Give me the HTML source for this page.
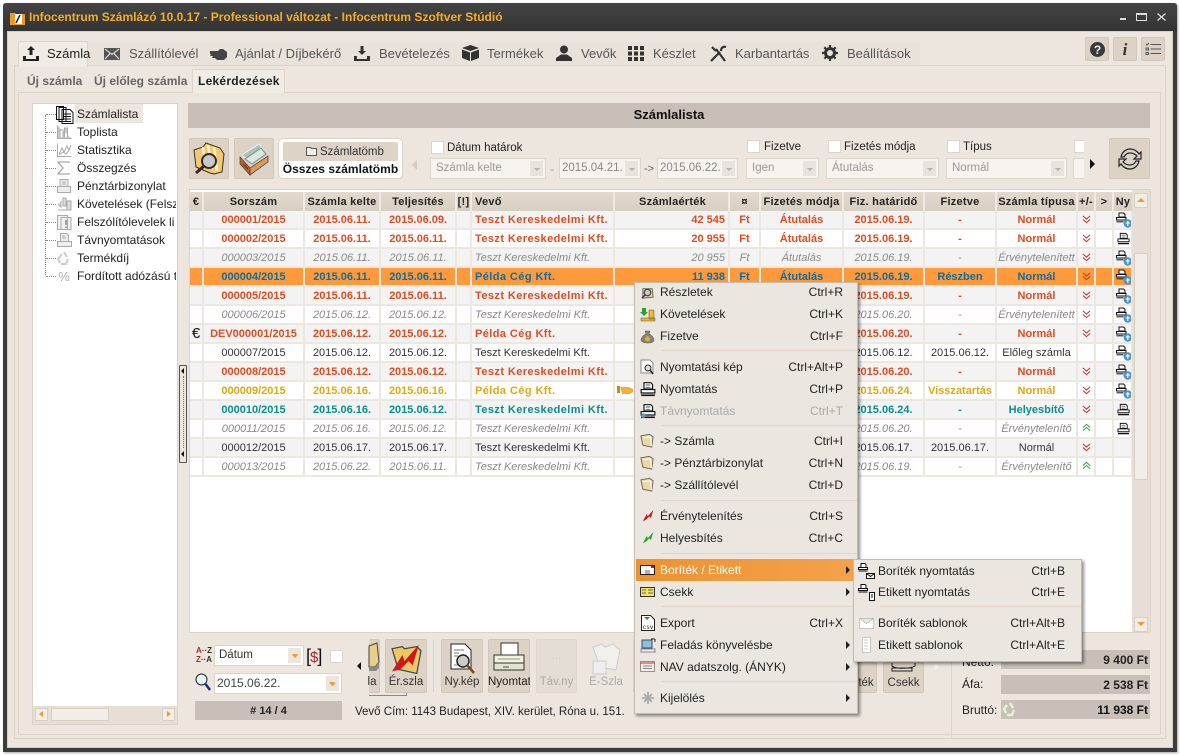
<!DOCTYPE html>
<html><head><meta charset="utf-8"><style>
html,body{margin:0;padding:0;background:#fff}
#w{position:relative;width:1180px;height:755px;overflow:hidden;font:12px "Liberation Sans",sans-serif;color:#222;background:#fff}
.a,.l,.c,.ck,.bt,.cb{position:absolute}
.l{white-space:nowrap;line-height:14px}
.c{white-space:nowrap;line-height:14px;text-align:center}
.ck{width:11px;height:11px;background:#fff;border:1px solid #ddd6cc}
.bt{background:#dcd2c6;border:1px solid #d0c6b9;border-radius:2px;box-sizing:border-box}
.cb{background:#f7f4f0;border:1px solid #ddd6cc;box-sizing:border-box;color:#999;font-size:11.5px;line-height:19px;padding-left:5px;white-space:nowrap;overflow:hidden}
.cb i{position:absolute;right:2px;top:2px;bottom:2px;width:13px;background:#e8e3dc}
.cb i:after{content:"";position:absolute;left:4px;top:7px;border:3px solid transparent;border-top:3px solid #b8b0a6}
.n{position:absolute;top:46px;font-size:13px;line-height:15px;color:#555;white-space:nowrap}
svg{position:absolute;overflow:visible}
table{position:absolute;left:190px;top:192px;width:942px;border-collapse:collapse;table-layout:fixed;font-size:11px}
th{height:19px;padding:0;background:linear-gradient(#e2dace,#d8cfc2);border-right:2px solid #efeae4;font-size:11px;font-weight:bold;color:#222;letter-spacing:.25px;white-space:nowrap;overflow:hidden}
td{height:17px;padding:0;border-right:2px solid #ece7e0;border-bottom:2px solid #ece7e0;text-align:center;white-space:nowrap;overflow:hidden;position:relative;letter-spacing:0}
tr.e td{background:#f3f3f3}
tr.w td{background:#fff}
tr.s td{background:#fe9a3b;border-right-color:#f3e7d8;color:#0b6ea6;font-weight:bold}
tr.r td{color:#e8491d;font-weight:bold}
tr.g td{color:#8a8a8a;font-style:italic}
tr.k td{color:#333}
tr.y td{color:#e5a80c;font-weight:bold}
tr.t td{color:#08908c;font-weight:bold}
tr.s td.v,tr.r td.v,tr.y td.v,tr.t td.v{letter-spacing:.42px}
td.v{text-align:left;padding-left:3px}
td.m{text-align:right;padding-right:3px}
td svg{left:2px;top:2px}
.m1{position:absolute;left:634px;top:282px;width:224px;height:432px;background:#ece6e0;border:1px solid #c6bcb0;box-sizing:border-box;box-shadow:2px 2px 3px rgba(0,0,0,.45)}
.m2{position:absolute;left:853px;top:559px;width:229px;height:103px;background:#ece6e0;border:1px solid #c6bcb0;box-sizing:border-box;box-shadow:2px 2px 3px rgba(0,0,0,.45)}
.ml{position:absolute;left:660px;white-space:nowrap;line-height:14px;font-size:12px;color:#222}
.mr{position:absolute;right:337px;white-space:nowrap;line-height:14px;font-size:12px;color:#222}
.sp{position:absolute;left:661px;width:196px;height:1px;background:#e0d5c8}
.ar{position:absolute;left:846px;border:4px solid transparent;border-left:4px solid #222;border-right:0}
.tl{position:absolute;left:77px;white-space:nowrap;line-height:14px;font-size:12px;color:#222}
.dh{position:absolute;height:0;border-top:1px dotted #888;left:46px;width:10px}
.bl{position:absolute;white-space:nowrap;font-size:11.5px;text-align:center;line-height:14px;color:#333}
</style></head><body><div id="w">
<svg width="0" height="0" style="position:absolute"><defs>
<symbol id="pr" viewBox="0 0 14 14"><path d="M3.500 1.500h6l1.500 1.500v4H3.500zM1 7.500h12v3H1z" fill="#fff" stroke="#111" stroke-width="1"/><path d="M1 12.500h12" stroke="#111" stroke-width="1.400"/><path d="M5 3.500h4M5 5.500h4" stroke="#555" stroke-width=".8"/></symbol>
<symbol id="pp" viewBox="0 0 16 16"><path d="M3 1h4.500L9 2.500V5H3zM.5 5.500h9.500v2.500H.5z" fill="#fff" stroke="#111" stroke-width="1"/><path d="M.5 9.800h7" stroke="#111" stroke-width="1"/><circle cx="11.800" cy="11.500" r="4.200" fill="#4f93c6"/><path d="M11.800 9v5M9.800 11h4" stroke="#e6f6ff" stroke-width="1.200"/></symbol>
<symbol id="dn" viewBox="0 0 10 10"><path d="M1 1l4 3.500L9 1M1 5l4 3.500L9 5" fill="none" stroke="#d0302a" stroke-width="1.100"/></symbol>
<symbol id="up" viewBox="0 0 10 10"><path d="M1 5l4-3.500L9 5M1 8.500L5 5l4 3.500" fill="none" stroke="#2aa84a" stroke-width="1.100"/></symbol>
<symbol id="fo" viewBox="0 0 16 16"><path d="M1 3l9-1.500 4 2.500-1.500 11L3 13z" fill="#e9d9a8" stroke="#6b6250"/><path d="M3 5l8-1 1.500 10" fill="none" stroke="#fff"/></symbol>
<symbol id="zi" viewBox="0 0 16 16"><path d="M3 4h10l1 9-11 1z" fill="#e6d8a8" stroke="#665"/><circle cx="8" cy="8" r="3.500" fill="#c8c8c8" stroke="#444" stroke-width="1.300"/><path d="M5.500 10.500L2 14" stroke="#433" stroke-width="1.600"/></symbol>
<symbol id="bolt" viewBox="0 0 16 16"><path d="M1 15L6 6l1 3 7-8-3 10-2-2-4 4z" fill="currentColor"/></symbol>
</defs></svg>

<!-- window frame -->
<div class="a" style="left:3px;top:3px;width:1174px;height:749px;background:#3c3c3c;border-radius:3px 3px 0 0;box-shadow:1px 1px 2px rgba(0,0,0,.35)"></div>
<div class="a" style="left:3px;top:3px;width:1174px;height:28px;background:linear-gradient(#444,#333);border-radius:3px 3px 0 0"></div>
<div class="a" style="left:7px;top:31px;width:1166px;height:717px;background:#ece6df;border:1px solid #d8cfc3;box-sizing:border-box"></div>
<svg style="left:10px;top:11px" width="16" height="15" viewBox="0 0 16 15"><path d="M0 2h5l1 1h9v11H0z" fill="#e99a2a"/><path d="M5 3h7v10H5z" fill="#fff"/><path d="M6 12l4-8" stroke="#222" stroke-width="1.500"/></svg>
<div class="l" style="left:29px;top:10px;font-size:12px;font-weight:bold;color:#f5ad24;letter-spacing:.01px">Infocentrum Számlázó 10.0.17 - Professional változat - Infocentrum Szoftver Stúdió</div>
<div class="a" style="left:1120px;top:18px;width:6px;height:2px;background:#ddd"></div>
<div class="a" style="left:1136px;top:13px;width:9px;height:5px;border:1px solid #ddd;border-top-width:2px;box-sizing:content-box"></div>
<svg style="left:1157px;top:13px" width="9" height="8" viewBox="0 0 9 8"><path d="M.5.500l8 7M8.500.500l-8 7" stroke="#ddd" stroke-width="1.300" fill="none"/></svg>

<!-- tab page frames -->
<div class="a" style="left:14px;top:65px;width:1152px;height:674px;border:1px solid #ddd3c6;box-sizing:border-box"></div>
<div class="a" style="left:18px;top:92px;width:1143px;height:643px;border:1px solid #ddd3c6;box-sizing:border-box"></div>
<div class="a" style="left:88px;top:42px;width:832px;height:23px;background:#e9e2da"></div>
<div class="a" style="left:18px;top:41px;width:70px;height:26px;background:#f0ebe5;border:1px solid #ddd3c6;border-bottom:0;box-sizing:border-box"></div>

<!-- nav -->
<svg style="left:23px;top:46px" width="16" height="15" viewBox="0 0 16 15" fill="#222"><path d="M6.500 9V4H4l4-4 4 4H9.500v5zM0 10h3v3h10v-3h3v5H0z"/></svg>
<div class="n" style="left:47px;color:#222">Számla</div>
<svg style="left:104px;top:48px" width="16" height="12" viewBox="0 0 16 12"><path d="M0 0h16v12H0z" fill="#555"/><path d="M1 1l7 5.500L15 1M1 11l5-5.500M15 11l-5-5.500" fill="none" stroke="#eee"/></svg>
<div class="n" style="left:129px">Szállítólevél</div>
<svg style="left:210px;top:48px" width="17" height="12" viewBox="0 0 17 12" fill="#444"><path d="M0 3h8l2-2h3l4 3v5l-3 3H7L5 10H2l1-2H0l1-2H0z"/></svg>
<div class="n" style="left:235px">Ajánlat / Díjbekérő</div>
<svg style="left:354px;top:46px" width="16" height="15" viewBox="0 0 16 15" fill="#333"><path d="M6.500 0h3v5H12L8 9 4 5h2.500zM0 10h3v3h10v-3h3v5H0z"/></svg>
<div class="n" style="left:379px">Bevételezés</div>
<svg style="left:462px;top:45px" width="17" height="16" viewBox="0 0 17 16" fill="#333"><path d="M8.500 0L17 3 8.500 6 0 3zM0 4.500l8 3V16l-8-3zM17 4.500l-8 3V16l8-3z"/></svg>
<div class="n" style="left:487px">Termékek</div>
<svg style="left:556px;top:45px" width="16" height="16" viewBox="0 0 16 16" fill="#333"><circle cx="8" cy="4.500" r="4"/><path d="M0 16v-3l5-3.500h6l5 3.500v3z"/></svg>
<div class="n" style="left:581px">Vevők</div>
<svg style="left:628px;top:46px" width="16" height="15" viewBox="0 0 16 15" fill="#333"><path d="M0 0h4v4H0zM6 0h4v4H6zM12 0h4v4h-4zM0 5.500h4v4H0zM6 5.500h4v4H6zM12 5.500h4v4h-4zM0 11h4v4H0zM6 11h4v4H6zM12 11h4v4h-4z"/></svg>
<div class="n" style="left:653px">Készlet</div>
<svg style="left:710px;top:45px" width="17" height="17" viewBox="0 0 17 17" fill="none" stroke="#333" stroke-width="2.200"><path d="M1 16L10 7M6 4l9 12M2 2l4 4M11 6c0-3 2-5 5-4"/></svg>
<div class="n" style="left:735px">Karbantartás</div>
<svg style="left:822px;top:45px" width="16" height="16" viewBox="0 0 16 16"><circle cx="8" cy="8" r="4.500" fill="none" stroke="#333" stroke-width="3"/><path d="M8 0v16M0 8h16M2.300 2.300l11.400 11.400M13.700 2.300L2.300 13.700" stroke="#333" stroke-width="2.200" stroke-dasharray="3 10"/></svg>
<div class="n" style="left:847px">Beállítások</div>
<div class="bt" style="left:1085px;top:37px;width:24px;height:24px"></div>
<svg style="left:1090px;top:42px" width="15" height="15" viewBox="0 0 15 15"><circle cx="7.500" cy="7.500" r="7.500" fill="#3a3a3a"/><text x="7.500" y="12" text-anchor="middle" font-size="12" font-weight="bold" fill="#eee" font-family="Liberation Sans">?</text></svg>
<div class="bt" style="left:1113px;top:37px;width:24px;height:24px"></div>
<div class="c" style="left:1113px;top:41px;width:24px;font:italic bold 17px/17px 'Liberation Serif',serif;color:#333">i</div>
<div class="bt" style="left:1141px;top:37px;width:24px;height:24px"></div>
<svg style="left:1145px;top:41px" width="16" height="16" viewBox="0 0 16 16" stroke="#555" fill="none"><path d="M5.500 3.500H16M5.500 8H16M5.500 12.500H16M1 3l1 1 2-2M1 7h2.500v2H1zM1 11.500h2.500v2H1z"/></svg>

<!-- sub tabs -->
<div class="l" style="left:27px;top:74px;font-size:12px;font-weight:bold;color:#666">Új számla</div>
<div class="l" style="left:94px;top:74px;font-size:12px;font-weight:bold;color:#666">Új előleg számla</div>
<div class="a" style="left:192px;top:69px;width:93px;height:24px;background:#f0ebe5;border:1px solid #ddd3c6;border-bottom:0;box-sizing:border-box"></div>
<div class="l" style="left:198px;top:74px;font-size:12px;font-weight:bold;color:#222;letter-spacing:.25px">Lekérdezések</div>

<!-- tree -->
<div class="a" style="left:32px;top:103px;width:146px;height:622px;background:#fff;border:1px solid #ddd3c6;box-sizing:border-box"></div>
<div class="a" style="left:75px;top:104px;width:68px;height:19px;background:#ece6df"></div>
<div class="a" style="left:45px;top:115px;height:160px;border-left:1px dotted #888"></div>
<div class="dh" style="top:114px"></div><div class="dh" style="top:132px"></div><div class="dh" style="top:150px"></div><div class="dh" style="top:168px"></div><div class="dh" style="top:186px"></div><div class="dh" style="top:204px"></div><div class="dh" style="top:222px"></div><div class="dh" style="top:240px"></div><div class="dh" style="top:258px"></div><div class="dh" style="top:276px"></div>
<svg style="left:56px;top:106px" width="18" height="18" viewBox="0 0 18 18" fill="#fff" stroke="#111"><path d="M.5.500h7v13h-7zM3 1.500h7v14H3zM6 3.500h8l3 3v11H6z"/><path d="M8 8h7M8 10.500h7M8 13h7M8 15.500h7"/></svg>
<svg style="left:57px;top:125px" width="15" height="14" viewBox="0 0 15 14" fill="#ccc" stroke="#aaa"><path d="M.5.500v13h14M3 12V5h3v7M7.500 12V3h3v9"/></svg>
<svg style="left:57px;top:143px" width="15" height="14" viewBox="0 0 15 14" fill="none" stroke="#aaa"><path d="M.5.500v13h14M2 11l3-6 2 4 3-6 2 4 2-5M2 12l4-3 3 2 4-5"/></svg>
<svg style="left:57px;top:161px" width="13" height="14" viewBox="0 0 13 14" fill="none" stroke="#aaa" stroke-width="1.300"><path d="M12 2V1H1l5 6-5 6h11v-1"/></svg>
<svg style="left:57px;top:179px" width="15" height="14" viewBox="0 0 15 14" fill="#eee" stroke="#aaa"><path d="M3 .500h8v7H3zM.5 7.500h13v6H.5zM5 3h4M5 5h4"/></svg>
<svg style="left:57px;top:197px" width="15" height="14" viewBox="0 0 15 14" fill="#ddd" stroke="#aaa"><path d="M6 1h3v8H6zM10 4h4v9h-4zM1 13h12M4 4v6L1 7"/></svg>
<svg style="left:57px;top:215px" width="15" height="15" viewBox="0 0 15 15" fill="#f0f0f0" stroke="#aaa"><path d="M.5.500h10v14H.5zM4 2.500h10v12H4z"/><path d="M9 5v5M9 11.500v1.500" stroke="#888" stroke-width="1.500"/></svg>
<svg style="left:57px;top:233px" width="15" height="15" viewBox="0 0 15 15" fill="#eee" stroke="#aaa"><path d="M3.500.500h6l2 2v6h-8zM.5 8.500h14v5H.5zM5 3h3M5 5h4"/></svg>
<svg style="left:57px;top:251px" width="14" height="14" viewBox="0 0 14 14" fill="none" stroke="#ccc" stroke-width="2"><path d="M7 1l3 5M11 8l-2 5H4M3 12L1 8l4-5"/></svg>
<div class="c" style="left:57px;top:270px;width:14px;font-size:13px;color:#aaa">%</div>
<div class="tl" style="top:107px">Számlalista</div>
<div class="tl" style="top:125px">Toplista</div>
<div class="tl" style="top:143px">Statisztika</div>
<div class="tl" style="top:161px">Összegzés</div>
<div class="tl" style="top:179px">Pénztárbizonylat</div>
<div class="tl" style="top:197px;width:99px;overflow:hidden">Követelések (Felsz</div>
<div class="tl" style="top:215px;width:99px;overflow:hidden">Felszólítólevelek li</div>
<div class="tl" style="top:233px">Távnyomtatások</div>
<div class="tl" style="top:251px">Termékdíj</div>
<div class="tl" style="top:269px;width:99px;overflow:hidden">Fordított adózású t</div>
<!-- tree hscroll -->
<div class="a" style="left:33px;top:706px;width:144px;height:18px;background:#e6dfd5"></div>
<div class="a" style="left:35px;top:708px;width:13px;height:13px;background:#f2ede7;border:1px solid #d8cfc3;box-sizing:border-box"></div>
<div class="a" style="left:51px;top:708px;width:58px;height:13px;background:#f2ede7;border:1px solid #d8cfc3;box-sizing:border-box"></div>
<div class="a" style="left:162px;top:708px;width:13px;height:13px;background:#f2ede7;border:1px solid #d8cfc3;box-sizing:border-box"></div>
<div class="a" style="left:39px;top:711px;border:3px solid transparent;border-right:4px solid #f29a2e;border-left:0"></div>
<div class="a" style="left:167px;top:711px;border:3px solid transparent;border-left:4px solid #f29a2e;border-right:0"></div>
<!-- splitter -->
<div class="a" style="left:179px;top:365px;width:8px;height:98px;background:#ece6df;border:1px solid #555;box-sizing:border-box;border-radius:1px"></div>
<div class="a" style="left:181px;top:368px;border:3px solid transparent;border-right:3px solid #111;border-left:0"></div>
<div class="a" style="left:181px;top:451px;border:3px solid transparent;border-right:3px solid #111;border-left:0"></div>
<div class="a" style="left:183px;top:376px;height:72px;border-left:1px dotted #777"></div>

<!-- heading -->
<div class="a" style="left:188px;top:103px;width:962px;height:25px;background:#c8bfb8"></div>
<div class="c" style="left:188px;top:108px;width:962px;font-size:13px;font-weight:bold;color:#111">Számlalista</div>

<!-- toolbar -->
<div class="bt" style="left:189px;top:138px;width:40px;height:41px"></div>
<svg style="left:192px;top:141px" width="34" height="35" viewBox="0 0 34 35"><path d="M2 9l9-3 3-4 14 5 4 6-2 18-8 2-4-1-14-6z" fill="#f2c873" stroke="#3a3020"/><path d="M11 6l2 18M16 4l4 24M22 6l3 24" stroke="#fff2c8" stroke-width="2.500"/><circle cx="17" cy="20" r="7" fill="#c9c9c9" stroke="#2c2c2c" stroke-width="2"/><path d="M12 25l-8 7" stroke="#40281a" stroke-width="3"/></svg>
<div class="bt" style="left:234px;top:138px;width:40px;height:41px"></div>
<svg style="left:239px;top:143px" width="30" height="32" viewBox="0 0 30 32"><path d="M3 12L20 1l6 9-15 9z" fill="#a9c4b4" stroke="#eef"/><path d="M6 16L22 5l5 6-14 10z" fill="#dbe8dc" stroke="#789"/><path d="M1 14l10 11v7L1 21z" fill="#b06a3a" stroke="#5a3014" stroke-width=".7"/><path d="M11 25l18-12v6L11 32z" fill="#d69a62" stroke="#5a3014" stroke-width=".7"/><path d="M4 20l5 5v2l-5-5z" fill="#6b3b1a"/></svg>
<div class="a" style="left:278px;top:138px;width:125px;height:41px;background:#fff;border:1px solid #ddd3c6;border-radius:5px;box-sizing:border-box"></div>
<div class="a" style="left:283px;top:142px;width:115px;height:19px;background:#ddd3c6;border-radius:2px"></div>
<svg style="left:306px;top:146px" width="11" height="10" viewBox="0 0 11 10"><path d="M.5 1.500h4l1 1h5v7H.5z" fill="#eee" stroke="#555"/></svg>
<div class="l" style="left:320px;top:145px;font-size:11.500px;color:#333">Számlatömb</div>
<div class="c" style="left:279px;top:162px;width:123px;font-size:12px;font-weight:bold;color:#111;letter-spacing:.05px">Összes számlatömb</div>
<div class="a" style="left:412px;top:160px;border:5px solid transparent;border-right:5px solid #d5ccc0;border-left:0"></div>

<div class="ck" style="left:431px;top:141px"></div><div class="l" style="left:447px;top:141px;font-size:11.500px;color:#222">Dátum határok</div>
<div class="cb" style="left:430px;top:158px;width:116px;height:21px">Számla kelte<i></i></div>
<div class="l" style="left:550px;top:162px;color:#999">-</div>
<div class="cb" style="left:559px;top:158px;width:82px;height:21px;color:#888;padding-left:2px">2015.04.21.<i></i></div>
<div class="l" style="left:644px;top:162px;color:#666;font-size:11px">-&gt;</div>
<div class="cb" style="left:657px;top:158px;width:81px;height:21px;color:#888;padding-left:2px">2015.06.22.<i></i></div>
<div class="ck" style="left:747px;top:140px"></div><div class="l" style="left:764px;top:140px;font-size:11.500px">Fizetve</div>
<div class="cb" style="left:746px;top:158px;width:73px;height:21px">Igen<i></i></div>
<div class="ck" style="left:828px;top:140px"></div><div class="l" style="left:844px;top:140px;font-size:11.500px">Fizetés módja</div>
<div class="cb" style="left:826px;top:158px;width:113px;height:21px">Átutalás<i></i></div>
<div class="ck" style="left:947px;top:140px"></div><div class="l" style="left:963px;top:140px;font-size:11.500px">Típus</div>
<div class="cb" style="left:946px;top:158px;width:121px;height:21px">Normál<i></i></div>
<div class="ck" style="left:1074px;top:140px;border-right:0;width:9px"></div>
<div class="cb" style="left:1073px;top:158px;width:11px;height:21px;border-right:0"></div>
<div class="a" style="left:1090px;top:159px;border:5px solid transparent;border-left:5px solid #111;border-right:0"></div>
<div class="bt" style="left:1109px;top:138px;width:41px;height:41px"></div>
<svg style="left:1117px;top:146px" width="26" height="26" viewBox="0 0 26 26" fill="none" stroke="#222" stroke-width="1.200"><path d="M4 11C5 6 9 3 13 3c4 0 7 2 9 5l2-2v7h-7l3-3c-2-2-4-3-7-3-3 0-5 2-6 4zM22 15c-1 5-5 8-9 8-4 0-7-2-9-5l-2 2v-7h7l-3 3c2 2 4 3 7 3 3 0 5-2 6-4z"/></svg>

<!-- grid panel -->
<div class="a" style="left:189px;top:189px;width:962px;height:444px;background:#fff;border:1px solid #ddd3c6;box-sizing:border-box"></div>
<table><colgroup><col style="width:13px"><col style="width:101px"><col style="width:76px"><col style="width:76px"><col style="width:15px"><col style="width:143px"><col style="width:115px"><col style="width:31px"><col style="width:83px"><col style="width:81px"><col style="width:72px"><col style="width:81px"><col style="width:18px"><col style="width:18px"><col style="width:19px"></colgroup>
<tr><th>€</th><th>Sorszám</th><th>Számla kelte</th><th>Teljesítés</th><th>[!]</th><th style="text-align:left;padding-left:3px">Vevő</th><th style="text-align:right;padding-right:22px">Számlaérték</th><th>¤</th><th>Fizetés módja</th><th>Fiz. határidő</th><th>Fizetve</th><th>Számla típusa</th><th>+/-</th><th>&gt;</th><th style="border-right:0">Ny</th></tr>
<tr class="e r"><td></td><td>000001/2015</td><td>2015.06.11.</td><td>2015.06.09.</td><td></td><td class="v">Teszt Kereskedelmi Kft.</td><td class="m">42 545</td><td>Ft</td><td>Átutalás</td><td>2015.06.19.</td><td>-</td><td>Normál</td><td><svg width="9" height="9" style="left:4px;top:4px"><use href="#dn"/></svg></td><td></td><td><svg width="16" height="16" style="left:2px;top:1px"><use href="#pp"/></svg></td></tr>
<tr class="w r"><td></td><td>000002/2015</td><td>2015.06.11.</td><td>2015.06.11.</td><td></td><td class="v">Teszt Kereskedelmi Kft.</td><td class="m">20 955</td><td>Ft</td><td>Átutalás</td><td>2015.06.19.</td><td>-</td><td>Normál</td><td><svg width="9" height="9" style="left:4px;top:4px"><use href="#dn"/></svg></td><td></td><td><svg width="13" height="13" style="left:3px;top:2px"><use href="#pr"/></svg></td></tr>
<tr class="e g"><td></td><td>000003/2015</td><td>2015.06.11.</td><td>2015.06.11.</td><td></td><td class="v">Teszt Kereskedelmi Kft.</td><td class="m">20 955</td><td>Ft</td><td>Átutalás</td><td>2015.06.19.</td><td>-</td><td>Érvénytelenített</td><td><svg width="9" height="9" style="left:4px;top:4px"><use href="#dn"/></svg></td><td></td><td><svg width="16" height="16" style="left:2px;top:1px"><use href="#pp"/></svg></td></tr>
<tr class="s"><td></td><td>000004/2015</td><td>2015.06.11.</td><td>2015.06.11.</td><td></td><td class="v">Példa Cég Kft.</td><td class="m">11 938</td><td>Ft</td><td>Átutalás</td><td>2015.06.19.</td><td>Részben</td><td>Normál</td><td><svg width="9" height="9" style="left:4px;top:4px"><use href="#dn"/></svg></td><td></td><td><svg width="16" height="16" style="left:2px;top:1px"><use href="#pp"/></svg></td></tr>
<tr class="e r"><td></td><td>000005/2015</td><td>2015.06.11.</td><td>2015.06.11.</td><td></td><td class="v">Teszt Kereskedelmi Kft.</td><td class="m"></td><td></td><td></td><td>2015.06.19.</td><td>-</td><td>Normál</td><td><svg width="9" height="9" style="left:4px;top:4px"><use href="#dn"/></svg></td><td></td><td><svg width="16" height="16" style="left:2px;top:1px"><use href="#pp"/></svg></td></tr>
<tr class="w g"><td></td><td>000006/2015</td><td>2015.06.12.</td><td>2015.06.12.</td><td></td><td class="v">Teszt Kereskedelmi Kft.</td><td class="m"></td><td></td><td></td><td>2015.06.20.</td><td>-</td><td>Érvénytelenített</td><td><svg width="9" height="9" style="left:4px;top:4px"><use href="#dn"/></svg></td><td></td><td><svg width="16" height="16" style="left:2px;top:1px"><use href="#pp"/></svg></td></tr>
<tr class="e r"><td style="font:normal 15px 'Liberation Sans';color:#111">€</td><td>DEV000001/2015</td><td>2015.06.12.</td><td>2015.06.12.</td><td></td><td class="v">Példa Cég Kft.</td><td class="m"></td><td></td><td></td><td>2015.06.20.</td><td>-</td><td>Normál</td><td><svg width="9" height="9" style="left:4px;top:4px"><use href="#dn"/></svg></td><td></td><td><svg width="16" height="16" style="left:2px;top:1px"><use href="#pp"/></svg></td></tr>
<tr class="w k"><td></td><td>000007/2015</td><td>2015.06.12.</td><td>2015.06.12.</td><td></td><td class="v">Teszt Kereskedelmi Kft.</td><td class="m"></td><td></td><td></td><td>2015.06.12.</td><td>2015.06.12.</td><td>Előleg számla</td><td></td><td></td><td><svg width="16" height="16" style="left:2px;top:1px"><use href="#pp"/></svg></td></tr>
<tr class="e r"><td></td><td>000008/2015</td><td>2015.06.12.</td><td>2015.06.12.</td><td></td><td class="v">Teszt Kereskedelmi Kft.</td><td class="m"></td><td></td><td></td><td>2015.06.20.</td><td>-</td><td>Normál</td><td><svg width="9" height="9" style="left:4px;top:4px"><use href="#dn"/></svg></td><td></td><td><svg width="16" height="16" style="left:2px;top:1px"><use href="#pp"/></svg></td></tr>
<tr class="w y"><td></td><td>000009/2015</td><td>2015.06.16.</td><td>2015.06.16.</td><td></td><td class="v">Példa Cég Kft.</td><td class="m"></td><td></td><td></td><td>2015.06.24.</td><td style="overflow:visible">Visszatartás</td><td>Normál</td><td><svg width="9" height="9" style="left:4px;top:4px"><use href="#dn"/></svg></td><td></td><td><svg width="16" height="16" style="left:2px;top:1px"><use href="#pp"/></svg></td></tr>
<tr class="e t"><td></td><td>000010/2015</td><td>2015.06.16.</td><td>2015.06.12.</td><td></td><td class="v">Teszt Kereskedelmi Kft.</td><td class="m"></td><td></td><td></td><td>2015.06.24.</td><td>-</td><td>Helyesbítő</td><td><svg width="9" height="9" style="left:4px;top:4px"><use href="#dn"/></svg></td><td></td><td><svg width="13" height="13" style="left:3px;top:2px"><use href="#pr"/></svg></td></tr>
<tr class="w g"><td></td><td>000011/2015</td><td>2015.06.16.</td><td>2015.06.12.</td><td></td><td class="v">Teszt Kereskedelmi Kft.</td><td class="m"></td><td></td><td></td><td>2015.06.20.</td><td>-</td><td>Érvénytelenítő</td><td><svg width="9" height="9" style="left:4px;top:3px"><use href="#up"/></svg></td><td></td><td><svg width="13" height="13" style="left:3px;top:2px"><use href="#pr"/></svg></td></tr>
<tr class="e k"><td></td><td>000012/2015</td><td>2015.06.17.</td><td>2015.06.17.</td><td></td><td class="v">Teszt Kereskedelmi Kft.</td><td class="m"></td><td></td><td></td><td>2015.06.17.</td><td>2015.06.17.</td><td>Normál</td><td><svg width="9" height="9" style="left:4px;top:4px"><use href="#dn"/></svg></td><td></td><td></td></tr>
<tr class="w g"><td></td><td>000013/2015</td><td>2015.06.22.</td><td>2015.06.11.</td><td></td><td class="v">Teszt Kereskedelmi Kft.</td><td class="m"></td><td></td><td></td><td>2015.06.19.</td><td>-</td><td>Érvénytelenítő</td><td><svg width="9" height="9" style="left:4px;top:3px"><use href="#up"/></svg></td><td></td><td></td></tr>
</table>
<svg style="left:617px;top:384px" width="18" height="11" viewBox="0 0 18 11"><path d="M0 2h3v7H0z" fill="#c88a1e"/><path d="M3 3h9l4 2v3l-3 2H5z" fill="#eeb23a"/></svg>
<!-- grid scrollbar -->
<div class="a" style="left:1132px;top:190px;width:18px;height:442px;background:#e6dfd5"></div>
<div class="a" style="left:1134px;top:193px;width:12px;height:13px;background:#f2ede7;border:1px solid #d8cfc3;border-radius:2px"></div>
<div class="a" style="left:1137px;top:198px;border:4px solid transparent;border-bottom:4px solid #f29a2e;border-top:0"></div>
<div class="a" style="left:1134px;top:253px;width:12px;height:225px;background:#f2ede7;border:1px solid #d8cfc3;border-radius:2px"></div>
<div class="a" style="left:1134px;top:617px;width:12px;height:13px;background:#f2ede7;border:1px solid #d8cfc3;border-radius:2px"></div>
<div class="a" style="left:1137px;top:622px;border:4px solid transparent;border-top:4px solid #f29a2e;border-bottom:0"></div>

<!-- bottom left controls -->
<div class="l" style="left:196px;top:646px;font-size:8px;line-height:9px;color:#a03030;font-weight:bold">A<span style="color:#333">··Z</span><br>Z<span style="color:#333">··A</span></div>
<div class="cb" style="left:214px;top:645px;width:90px;height:21px;background:#fff;color:#333;padding-left:4px;border-color:#ddd3c6">Dátum<i style="background:#ece6df"></i></div>
<div class="a" style="left:292px;top:654px;border:3px solid transparent;border-top:4px solid #f29a2e;border-bottom:0"></div>
<div class="l" style="left:306px;top:647px;font-size:18px;line-height:18px;color:#111;letter-spacing:-1px;font-weight:normal">[<span style="color:#a02828;font-size:15px">$</span>]</div>
<div class="ck" style="left:330px;top:650px"></div>
<svg style="left:195px;top:673px" width="16" height="18" viewBox="0 0 16 18" fill="none"><circle cx="6.500" cy="6.500" r="5.500" fill="#e8f3f6" stroke="#222"/><path d="M10.500 11l4.500 6" stroke="#1c2e8c" stroke-width="2.500"/></svg>
<div class="cb" style="left:214px;top:673px;width:128px;height:21px;background:#fff;color:#444;padding-left:2px;border-color:#ddd3c6;font-size:12px">2015.06.22.<i style="background:#ece6df"></i></div>
<div class="a" style="left:329px;top:682px;border:3px solid transparent;border-top:4px solid #f29a2e;border-bottom:0"></div>
<div class="a" style="left:195px;top:701px;width:147px;height:19px;background:#c8bfb8"></div>
<div class="c" style="left:195px;top:704px;width:147px;font-size:11px;font-weight:bold;color:#222">#&nbsp;14 / 4</div>

<!-- bottom buttons -->
<div class="a" style="left:357px;top:662px;border:4px solid transparent;border-right:4px solid #111;border-left:0"></div>
<div class="bt" style="left:369px;top:639px;width:11px;height:54px;border-left:0"></div>
<svg style="left:369px;top:642px" width="11" height="34" viewBox="0 0 11 34"><path d="M0 4l8-3 2 19-4 5H0z" fill="#e8cf8a" stroke="#444"/><path d="M0 25h6l4-5v6l-3 3H0z" fill="#8a8a8a"/></svg>
<div class="bl" style="left:364px;top:675px;width:16px;overflow:hidden;direction:rtl">la</div>
<div class="a" style="left:369px;top:693px;width:38px;height:3px;border:1px solid #888;border-top:0;border-left:0;box-sizing:border-box"></div>
<div class="bt" style="left:385px;top:639px;width:42px;height:54px"></div>
<svg style="left:390px;top:642px" width="33" height="34" viewBox="0 0 16 16"><path d="M1 3l5-1 1 1 6-1 2 2-2 11-9-2z" fill="#eec66a" stroke="#444" stroke-width=".6"/><path d="M1 14L6 6l1 3 7-8-3 10-2-2-4 4z" fill="#d01818"/></svg>
<div class="bl" style="left:385px;top:675px;width:42px">Ér.szla</div>
<div class="a" style="left:433px;top:640px;width:1px;height:52px;background:#dcd4c8"></div>
<div class="bt" style="left:441px;top:639px;width:42px;height:54px"></div>
<svg style="left:449px;top:643px" width="27" height="33" viewBox="0 0 27 33"><path d="M2 1h14l6 6v19H2z" fill="#fff" stroke="#222"/><path d="M5 7h10M5 10h5M5 13h4M5 22h6" stroke="#777"/><circle cx="14" cy="18" r="6" fill="#ccc" stroke="#222" stroke-width="1.500"/><path d="M18 22l7 8" stroke="#7a4a18" stroke-width="2.500"/></svg>
<div class="bl" style="left:441px;top:675px;width:42px">Ny.kép</div>
<div class="bt" style="left:488px;top:639px;width:42px;height:54px"></div>
<svg style="left:493px;top:642px" width="32" height="33" viewBox="0 0 32 33"><path d="M8 1h17v13H8z" fill="#fff" stroke="#333"/><path d="M1 13h30v13H1z" fill="#f3f0dc" stroke="#333"/><path d="M1 21h30v7H1z" fill="#e6e2d0" stroke="#333"/><path d="M5 17h22" stroke="#999"/><path d="M10 25h6" stroke="#555"/></svg>
<div class="bl" style="left:488px;top:675px;width:42px;font-size:11.500px;color:#222;overflow:hidden">Nyomtat</div>
<div class="bt" style="left:536px;top:639px;width:41px;height:54px;background:#e4ddd3;border-color:#e0d8cd"></div>
<div class="c" style="left:536px;top:648px;width:41px;color:#cfc8bd">...</div>
<div class="bl" style="left:536px;top:675px;width:41px;color:#aaa">Táv.ny</div>
<svg style="left:592px;top:642px" width="29" height="33" viewBox="0 0 29 33"><path d="M1 5l9-3 3 3 8-3 7 6-4 20-16-3z" fill="#f2efec" stroke="#ccc"/><path d="M1 19h13v13H1z" fill="#eee" stroke="#ccc"/></svg>
<div class="bl" style="left:585px;top:675px;width:42px;color:#aaa">E-Szla</div>
<div class="a" style="left:633px;top:640px;width:1px;height:52px;background:#dcd4c8"></div>
<div class="l" style="left:355px;top:705px;font-size:11.500px;color:#222">Vevő Cím: 1143 Budapest, XIV. kerület, Róna u. 151.</div>

<!-- bottom right -->
<div class="bt" style="left:840px;top:662px;width:37px;height:31px;border-left:0"></div>
<div class="bl" style="left:856px;top:676px;width:20px;overflow:hidden">ték</div>
<div class="bt" style="left:883px;top:662px;width:41px;height:31px"></div>
<svg style="left:891px;top:662px" width="25" height="10" viewBox="0 0 25 10"><path d="M1 1v3c3 3 18 3 23 0V1M1 6h20v3H1z" fill="none" stroke="#222"/></svg>
<div class="bl" style="left:883px;top:676px;width:41px">Csekk</div>
<div class="a" style="left:935px;top:663px;border:4px solid transparent;border-left:4px solid #f6f3ee;border-right:0"></div>
<div class="a" style="left:951px;top:640px;width:1px;height:98px;background:#dcd4c8"></div>
<div class="l" style="left:962px;top:655px;font-size:12px;color:#222">Nettó:</div>
<div class="a" style="left:1001px;top:650px;width:149px;height:19px;background:#c8bfb8"></div>
<div class="l" style="right:32px;top:653px;font-size:12px;font-weight:bold;color:#222">9 400 Ft</div>
<div class="l" style="left:962px;top:677px;font-size:12px;color:#222">Áfa:</div>
<div class="a" style="left:1001px;top:675px;width:149px;height:19px;background:#c8bfb8"></div>
<div class="l" style="right:32px;top:678px;font-size:12px;font-weight:bold;color:#222">2 538 Ft</div>
<div class="l" style="left:962px;top:703px;font-size:12px;color:#222">Bruttó:</div>
<div class="a" style="left:1001px;top:700px;width:149px;height:19px;background:#c8bfb8"></div>
<svg style="left:1003px;top:702px" width="14" height="14" viewBox="0 0 14 14" fill="none" stroke="#e3f3da" stroke-width="2.500"><path d="M7 1l3 5M11 8l-2 5H4M3 11L1 7l3-4"/></svg>
<div class="l" style="right:32px;top:703px;font-size:12px;font-weight:bold;color:#111">11 938 Ft</div>

<!-- context menu -->
<div class="m1"></div>
<svg style="left:640px;top:285px" width="15" height="15"><use href="#zi"/></svg>
<svg style="left:640px;top:307px" width="16" height="15" viewBox="0 0 16 15"><path d="M1 11h14v3H1zM9 3h5v9H9z" fill="#eab92e" stroke="#554" stroke-width=".5"/><path d="M2 1h4v4h2l-4 4-4-4h2z" fill="#2ea02e"/></svg>
<svg style="left:640px;top:328px" width="15" height="16" viewBox="0 0 15 16"><path d="M5 3h5l-1 3c3 1 5 4 5 6s-2 3-6 3-7-1-7-3 2-5 5-6z" fill="#8a8270" stroke="#555" stroke-width=".5"/><circle cx="7.500" cy="11" r="2.500" fill="#d8b43c"/></svg>
<svg style="left:640px;top:359px" width="15" height="16" viewBox="0 0 15 16"><path d="M1 1h9l3 3v10H1z" fill="#fff" stroke="#888"/><circle cx="8" cy="9" r="3" fill="#ddd" stroke="#222"/><path d="M10 11l3 4" stroke="#222" stroke-width="1.500"/></svg>
<svg style="left:640px;top:381px" width="16" height="16"><use href="#pr"/></svg>
<svg style="left:640px;top:403px" width="16" height="16" viewBox="0 0 14 14"><use href="#pr" width="14" height="14"/><circle cx="3" cy="11" r="2" fill="#5a9ad0"/></svg>
<svg style="left:640px;top:433px" width="15" height="15"><use href="#fo"/></svg>
<svg style="left:640px;top:455px" width="15" height="15"><use href="#fo"/></svg>
<svg style="left:640px;top:477px" width="15" height="15"><use href="#fo"/></svg>
<svg style="left:642px;top:509px;color:#d01818" width="13" height="13"><use href="#bolt"/></svg>
<svg style="left:642px;top:531px;color:#2f9f2f" width="13" height="13"><use href="#bolt"/></svg>
<div class="a" style="left:636px;top:559px;width:217px;height:22px;background:linear-gradient(90deg,#ee9230,#f3a24c)"></div>
<svg style="left:640px;top:565px" width="15" height="10" viewBox="0 0 15 10"><path d="M.5.500h14v9H.5z" fill="#fff" stroke="#222"/><path d="M5 6h5M5 8h5" stroke="#666"/><path d="M11 1h3v2h-3z" fill="#d01818"/></svg>
<svg style="left:640px;top:587px" width="15" height="10" viewBox="0 0 15 10"><path d="M.5.500h14v9H.5z" fill="#f3e25a" stroke="#333"/><path d="M2 3h4M2 6h4M8 3h5M8 6h5" stroke="#666"/></svg>
<svg style="left:641px;top:615px" width="14" height="16" viewBox="0 0 14 16"><path d="M.5.500h9l4 4v11H.5z" fill="#fff" stroke="#222"/><path d="M3 2h6l-3 3z" fill="#1a9a2a"/><text x="7" y="14" text-anchor="middle" font-size="6" fill="#222" font-family="Liberation Mono">csv</text></svg>
<svg style="left:640px;top:638px" width="16" height="15" viewBox="0 0 16 15"><path d="M2 2h10v8H2z" fill="#8cc0dc" stroke="#446"/><path d="M1 11h14v3H1z" fill="#eee" stroke="#888"/><path d="M11 1h4M15 1v3" stroke="#222"/></svg>
<svg style="left:640px;top:661px" width="15" height="11" viewBox="0 0 15 11"><path d="M.5.500h14v10H.5z" fill="#f3ece8" stroke="#a88"/><path d="M.5 2h14" stroke="#c03030"/><path d="M3 5h9M3 7.500h9" stroke="#888"/></svg>
<svg style="left:642px;top:692px" width="12" height="12" viewBox="0 0 12 12" stroke="#aaa" stroke-width="1.800"><path d="M6 0v12M0 6h12M2 2l8 8M10 2l-8 8"/></svg>

<div class="ml" style="top:285px">Részletek</div><div class="mr" style="top:285px">Ctrl+R</div>
<div class="ml" style="top:307px">Követelések</div><div class="mr" style="top:307px">Ctrl+K</div>
<div class="ml" style="top:329px">Fizetve</div><div class="mr" style="top:329px">Ctrl+F</div>
<div class="sp" style="top:350px"></div>
<div class="ml" style="top:360px">Nyomtatási kép</div><div class="mr" style="top:360px">Ctrl+Alt+P</div>
<div class="ml" style="top:382px">Nyomtatás</div><div class="mr" style="top:382px">Ctrl+P</div>
<div class="ml" style="top:404px;color:#aaa">Távnyomtatás</div><div class="mr" style="top:404px;color:#aaa">Ctrl+T</div>
<div class="sp" style="top:425px"></div>
<div class="ml" style="top:434px">-&gt; Számla</div><div class="mr" style="top:434px">Ctrl+I</div>
<div class="ml" style="top:456px">-&gt; Pénztárbizonylat</div><div class="mr" style="top:456px">Ctrl+N</div>
<div class="ml" style="top:478px">-&gt; Szállítólevél</div><div class="mr" style="top:478px">Ctrl+D</div>
<div class="sp" style="top:500px"></div>
<div class="ml" style="top:509px">Érvénytelenítés</div><div class="mr" style="top:509px">Ctrl+S</div>
<div class="ml" style="top:531px">Helyesbítés</div><div class="mr" style="top:531px">Ctrl+C</div>
<div class="sp" style="top:553px"></div>
<div class="ml" style="top:563px;color:#fff">Boríték / Etikett</div><div class="ar" style="top:566px"></div>
<div class="ml" style="top:585px">Csekk</div><div class="ar" style="top:588px"></div>
<div class="sp" style="top:606px"></div>
<div class="ml" style="top:616px">Export</div><div class="mr" style="top:616px">Ctrl+X</div>
<div class="ml" style="top:638px">Feladás könyvelésbe</div><div class="ar" style="top:641px"></div>
<div class="ml" style="top:660px">NAV adatszolg. (ÁNYK)</div><div class="ar" style="top:663px"></div>
<div class="sp" style="top:681px"></div>
<div class="ml" style="top:691px">Kijelölés</div><div class="ar" style="top:694px"></div>

<!-- submenu -->
<div class="m2"></div>
<svg style="left:858px;top:563px" width="17" height="16" viewBox="0 0 17 16"><path d="M3 .500h4l1 1v3H3zM.5 4.500h9v2h-9zM.5 8h9" fill="#fff" stroke="#111"/><path d="M8.500 10.500h8v5h-8zM8.500 10.500l4 3 4-3" fill="#fff" stroke="#111"/></svg>
<svg style="left:858px;top:584px" width="17" height="17" viewBox="0 0 17 17"><path d="M3 .500h4l1 1v3H3zM.5 4.500h9v2h-9zM.5 8h9" fill="#fff" stroke="#111"/><path d="M11.500 8.500h5v8h-5zM13 11h2M13 13h2" fill="#fff" stroke="#111"/></svg>
<svg style="left:859px;top:618px" width="15" height="11" viewBox="0 0 15 11"><path d="M.5.500h14v10H.5zM.5.500l7 5 7-5" fill="#fff" stroke="#999" stroke-dasharray="1 1"/></svg>
<svg style="left:862px;top:637px" width="9" height="16" viewBox="0 0 9 16"><path d="M.5.500h8v15h-8zM2.500 3h4M2.500 6h4M2.500 9h4M2.500 12h4" fill="#fff" stroke="#999" stroke-dasharray="1 1"/></svg>
<div class="ml" style="left:878px;top:564px">Boríték nyomtatás</div><div class="mr" style="right:115px;top:564px">Ctrl+B</div>
<div class="ml" style="left:878px;top:585px">Etikett nyomtatás</div><div class="mr" style="right:115px;top:585px">Ctrl+E</div>
<div class="a" style="left:880px;top:606px;width:201px;height:1px;background:#e0d5c8"></div>
<div class="ml" style="left:878px;top:616px">Boríték sablonok</div><div class="mr" style="right:115px;top:616px">Ctrl+Alt+B</div>
<div class="ml" style="left:878px;top:638px">Etikett sablonok</div><div class="mr" style="right:115px;top:638px">Ctrl+Alt+E</div>
</div></body></html>
